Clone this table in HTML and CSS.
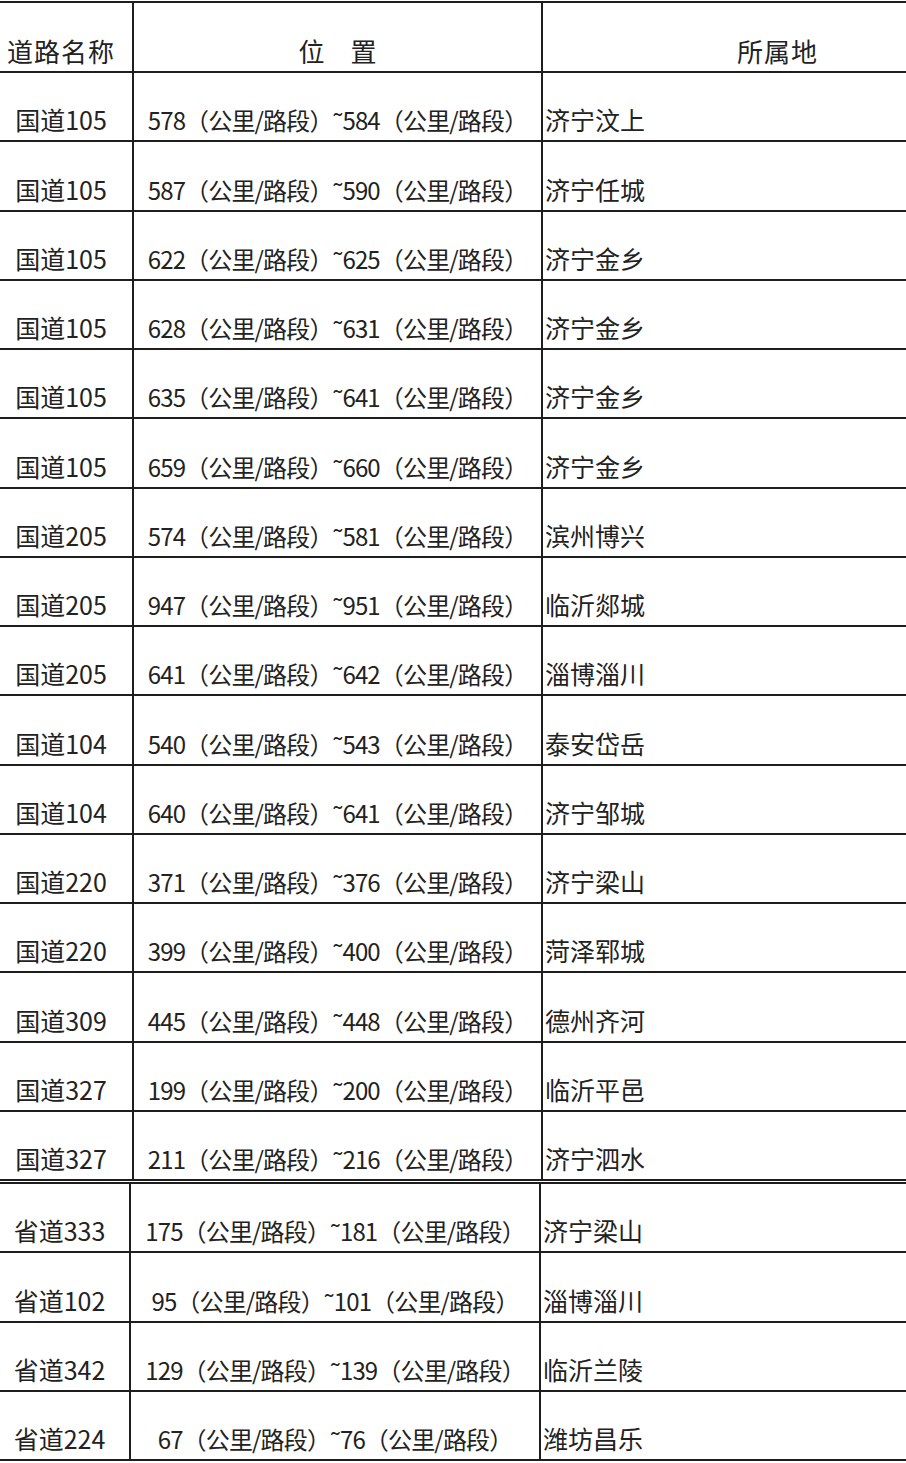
FILE: index.html
```html
<!DOCTYPE html>
<html lang="zh-CN">
<head>
<meta charset="utf-8">
<title>道路位置表</title>
<link rel="stylesheet" href="styles.css">
</head>
<body>
<div class="sheet sheet-a">
  <div class="row head">
    <div class="cell c1">道路名称</div>
    <div class="cell c2">位　置</div>
    <div class="cell c3 head-c3">所属地</div>
  </div>
  <div class="row"><div class="cell c1">国道105</div><div class="cell c2">578（公里/路段）˜584（公里/路段）</div><div class="cell c3">济宁汶上</div></div>
  <div class="row"><div class="cell c1">国道105</div><div class="cell c2">587（公里/路段）˜590（公里/路段）</div><div class="cell c3">济宁任城</div></div>
  <div class="row"><div class="cell c1">国道105</div><div class="cell c2">622（公里/路段）˜625（公里/路段）</div><div class="cell c3">济宁金乡</div></div>
  <div class="row"><div class="cell c1">国道105</div><div class="cell c2">628（公里/路段）˜631（公里/路段）</div><div class="cell c3">济宁金乡</div></div>
  <div class="row"><div class="cell c1">国道105</div><div class="cell c2">635（公里/路段）˜641（公里/路段）</div><div class="cell c3">济宁金乡</div></div>
  <div class="row"><div class="cell c1">国道105</div><div class="cell c2">659（公里/路段）˜660（公里/路段）</div><div class="cell c3">济宁金乡</div></div>
  <div class="row"><div class="cell c1">国道205</div><div class="cell c2">574（公里/路段）˜581（公里/路段）</div><div class="cell c3">滨州博兴</div></div>
  <div class="row"><div class="cell c1">国道205</div><div class="cell c2">947（公里/路段）˜951（公里/路段）</div><div class="cell c3">临沂郯城</div></div>
  <div class="row"><div class="cell c1">国道205</div><div class="cell c2">641（公里/路段）˜642（公里/路段）</div><div class="cell c3">淄博淄川</div></div>
  <div class="row"><div class="cell c1">国道104</div><div class="cell c2">540（公里/路段）˜543（公里/路段）</div><div class="cell c3">泰安岱岳</div></div>
  <div class="row"><div class="cell c1">国道104</div><div class="cell c2">640（公里/路段）˜641（公里/路段）</div><div class="cell c3">济宁邹城</div></div>
  <div class="row"><div class="cell c1">国道220</div><div class="cell c2">371（公里/路段）˜376（公里/路段）</div><div class="cell c3">济宁梁山</div></div>
  <div class="row"><div class="cell c1">国道220</div><div class="cell c2">399（公里/路段）˜400（公里/路段）</div><div class="cell c3">菏泽郓城</div></div>
  <div class="row"><div class="cell c1">国道309</div><div class="cell c2">445（公里/路段）˜448（公里/路段）</div><div class="cell c3">德州齐河</div></div>
  <div class="row"><div class="cell c1">国道327</div><div class="cell c2">199（公里/路段）˜200（公里/路段）</div><div class="cell c3">临沂平邑</div></div>
  <div class="row"><div class="cell c1">国道327</div><div class="cell c2">211（公里/路段）˜216（公里/路段）</div><div class="cell c3">济宁泗水</div></div>
</div>
<div class="sheet sheet-b">
  <div class="row"><div class="cell c1">省道333</div><div class="cell c2">175（公里/路段）˜181（公里/路段）</div><div class="cell c3">济宁梁山</div></div>
  <div class="row"><div class="cell c1">省道102</div><div class="cell c2">95（公里/路段）˜101（公里/路段）</div><div class="cell c3">淄博淄川</div></div>
  <div class="row"><div class="cell c1">省道342</div><div class="cell c2">129（公里/路段）˜139（公里/路段）</div><div class="cell c3">临沂兰陵</div></div>
  <div class="row"><div class="cell c1">省道224</div><div class="cell c2">67（公里/路段）˜76（公里/路段）</div><div class="cell c3">潍坊昌乐</div></div>
</div>
</body>
</html>
```

FILE: styles.css
```css
* { box-sizing: border-box; }

html, body {
  margin: 0;
  padding: 0;
  background: #ffffff;
}

body {
  width: 906px;
  height: 1463px;
  overflow: hidden;
  font-family: "Noto Sans CJK SC", "Noto Sans", sans-serif;
  color: #222222;
  font-size: 25px;
  line-height: 25px;
}

.sheet {
  display: flex;
  flex-direction: column;
}

.sheet-a {
  margin-top: 1px;
  border-top: 2px solid #1e1e1e;
}

.sheet-b {
  margin-top: 1px;
  border-top: 2px solid #1e1e1e;
}

.row {
  display: grid;
  height: 69.25px;
  border-bottom: 2px solid #1e1e1e;
}

.sheet-a .row { grid-template-columns: 134px 409px 1fr; }
.sheet-b .row { grid-template-columns: 131px 410px 1fr; }

.sheet-a .row.head { height: 70px; }

.cell {
  display: flex;
  align-items: flex-end;
  padding-bottom: 8px;
  white-space: nowrap;
}

.c1 {
  justify-content: center;
  padding-right: 10px;
  border-right: 2px solid #1e1e1e;
}

.c2 {
  justify-content: center;
  border-right: 2px solid #1e1e1e;
  font-size: 24px;
  line-height: 24px;
  letter-spacing: -0.85px;
}

.c3 {
  padding-left: 2px;
}

.head .cell {
  font-size: 26px;
  line-height: 26px;
  padding-bottom: 7px;
}

.head .c1 {
  letter-spacing: 1px;
}

.head .c2 {
  letter-spacing: 0;
}

.head-c3 {
  padding-left: 194px;
  letter-spacing: 1px;
}
```
